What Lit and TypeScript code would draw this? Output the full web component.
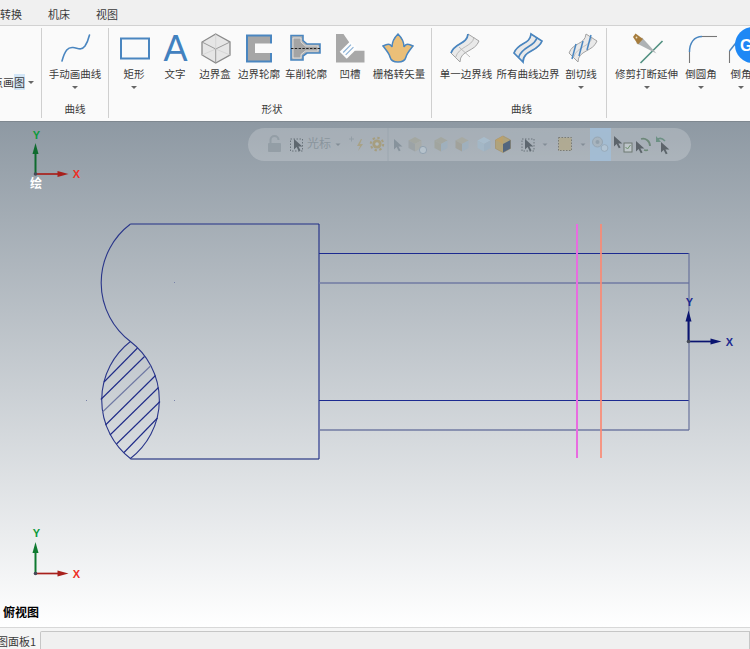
import { LitElement, html, css, svg } from "lit";
import { customElement } from "lit/decorators.js";

const BLUE = "#4a86c0";

const surfaceShape = (dx: number) => svg`
  <path transform="translate(${dx} 0)" d="M468,34 C467,45 455,42 451,53 L460,62 C460,50 475,52 479,41 Z" fill="#e9e9e9" stroke="#a3a3a3" stroke-width="1"/>`;

const icons: Record<string, unknown> = {
  curve: svg`<path d="M62,61 C65,50 68,47 73,47.5 C78,48 81,51 85,46 C87,43 88.5,39 89.5,35" fill="none" stroke="${BLUE}" stroke-width="1.6" stroke-linecap="round"/>`,
  rect: svg`<rect x="121" y="38.5" width="28" height="20" fill="none" stroke="${BLUE}" stroke-width="2"/>`,
  text: svg`<text x="175.5" y="61" text-anchor="middle" class="big-a">A</text>`,
  box: svg`
    <path d="M215.7,34 L230,42 V55 L215.7,63 L202,55 V42 Z" fill="#e6e6e6" stroke="#8a8a8a" stroke-width="1.3"/>
    <path d="M202,42 L215.7,49 L230,42 M215.7,49 V63" fill="none" stroke="#9a9a9a" stroke-width="1"/>
    <path d="M215.7,34 V49 M202,55 L215.7,49 M230,55 L215.7,49" fill="none" stroke="#cfcfcf" stroke-width=".7"/>`,
  outline: svg`
    <rect x="247" y="35.5" width="24" height="26" fill="#a6a6a6" stroke="${BLUE}" stroke-width="2"/>
    <rect x="255" y="43.5" width="17" height="9.5" fill="#fafafa"/>`,
  turn: svg`
    <path d="M291,35.5 H303 V40.5 L307,44 H320 V53 H307 L303,56 V60 H291 Z" fill="#b0b0b0" stroke="${BLUE}" stroke-width="1.6"/>
    <path d="M293,38 H301 V42 L305.5,46 H318 V51 H305.5 L301,54.5 V58 H293 Z" fill="#a4a4a4" stroke="#f4f4f4" stroke-width=".7"/>
    <path d="M291,48.5 H320" stroke="#222" stroke-width="1.2" stroke-dasharray="2.4 1.4"/>`,
  groove: svg`
    <path d="M336,34 H343.5 L355,50.7 H364.5 V62.5 H336 Z" fill="#a8a8a8"/>
    <g transform="rotate(-45 348.5 50)">
      <rect x="341" y="45" width="15" height="10" fill="#fdfdfd"/>
      <path d="M343,48 H354 M343,51.5 H354" stroke="#8db2d6" stroke-width="1.2"/>
    </g>`,
  raster: svg`<path d="M398,34 C402,38 404,41 404,47 C406,43 409,44 413,46 C410,50 407,53 406,57 C405,61 401,62 398,62 C395,62 391,61 390,57 C389,53 386,50 383,46 C387,44 390,43 392,47 C392,41 394,38 398,34Z" fill="#ebbf78" stroke="${BLUE}" stroke-width="1.5"/>`,
  edge: svg`
    ${surfaceShape(0)}
    <path d="M474,37.5 C472,47 459,46 455.5,57.5 M459,47 L470,57" fill="none" stroke="#b4b4b4" stroke-width=".9"/>
    <path d="M468,34 C467,45 455,42 451,53" fill="none" stroke="${BLUE}" stroke-width="1.8"/>`,
  edges: svg`
    ${surfaceShape(63)}
    <path d="M537,37.5 C535,47 522,46 518.5,57.5" fill="none" stroke="${BLUE}" stroke-width="1.6"/>
    <path transform="translate(63 0)" d="M468,34 C467,45 455,42 451,53 L460,62 C460,50 475,52 479,41 Z" fill="none" stroke="${BLUE}" stroke-width="1.7"/>`,
  section: svg`
    <g transform="translate(118 0)">
      <path d="M468,34 C467,45 455,42 451,53 L460,62 C460,50 475,52 479,41 Z" fill="#e9e9e9" stroke="#a3a3a3" stroke-width="1"/>
      <path d="M474,37.5 C472,47 459,46 455.5,57.5" fill="none" stroke="#bdbdbd" stroke-width=".9"/>
    </g>
    <path d="M576,44 L572,59 M583,41 L579,56 M591,35 L587,50" stroke="${BLUE}" stroke-width="1.5"/>`,
  trim: svg`
    <path d="M639.5,63 L661.5,41" stroke="#4f8f7f" stroke-width="1.6"/>
    <path d="M635,43 L641,37.5 L655.5,53.5 Z" fill="#aeb2b5"/>
    <path d="M632,37 L634.5,33.5 L642,39 L637,44.5 Z" fill="#a67c3c"/>
    <circle cx="635.5" cy="37.5" r=".9" fill="#f0e2c4"/>`,
  fillet: svg`
    <path d="M689.5,63 V51.5" fill="none" stroke="#777" stroke-width="1.1"/>
    <path d="M702,36.5 H717" fill="none" stroke="#777" stroke-width="1.1"/>
    <path d="M689.5,52 C689.5,43 694,36.5 702,36.5" fill="none" stroke="${BLUE}" stroke-width="1.5"/>`,
  chamfer: svg`
    <path d="M729.5,63 V51 M741,36.5 H760" fill="none" stroke="#777" stroke-width="1.1"/>
    <path d="M729.5,51 L741,36.5" fill="none" stroke="${BLUE}" stroke-width="1.5"/>`,
};

const centers: Record<string, number> = {
  curve: 75, rect: 134, text: 175, box: 215, outline: 259, turn: 306, groove: 350, raster: 399,
  edge: 466, edges: 528, section: 581, trim: 646, fillet: 701, chamfer: 741,
};

interface Btn { label: string; w: number; icon: string; caret?: boolean }
interface Group { cls: string; title: string; buttons: Btn[] }

const groups: Group[] = [
  { cls: "g2", title: "曲线", buttons: [{ label: "手动画曲线", w: 66, icon: "curve", caret: true }] },
  {
    cls: "g3", title: "形状", buttons: [
      { label: "矩形", w: 42, icon: "rect", caret: true },
      { label: "文字", w: 40, icon: "text" },
      { label: "边界盒", w: 40, icon: "box" },
      { label: "边界轮廓", w: 48, icon: "outline" },
      { label: "车削轮廓", w: 46, icon: "turn" },
      { label: "凹槽", w: 42, icon: "groove" },
      { label: "栅格转矢量", w: 56, icon: "raster" },
    ],
  },
  {
    cls: "g4", title: "曲线", buttons: [
      { label: "单一边界线", w: 58, icon: "edge" },
      { label: "所有曲线边界", w: 66, icon: "edges" },
      { label: "剖切线", w: 40, icon: "section", caret: true },
    ],
  },
  {
    cls: "g5", title: "", buttons: [
      { label: "修剪打断延伸", w: 67, icon: "trim", caret: true },
      { label: "倒圆角", w: 42, icon: "fillet", caret: true },
      { label: "倒角", w: 38, icon: "chamfer", caret: true },
    ],
  },
];

interface Triad {
  ox: number; oy: number; yTip: number; xTip: number;
  cy: string; cx: string; ly: string; lx: string;
  yLabelX: number; yLabelY: number; xLabelX: number;
}

const triads: Triad[] = [
  { ox: 35.5, oy: 174, yTip: 143, xTip: 68.5, cy: "#0f6b2e", cx: "#a8201c", ly: "#0c9a3a", lx: "#ee2e24", yLabelX: 36.5, yLabelY: 135, xLabelX: 76.5 },
  { ox: 35.5, oy: 573.5, yTip: 542, xTip: 68.5, cy: "#0f7a30", cx: "#a8201c", ly: "#0c9a3a", lx: "#ee2e24", yLabelX: 36.5, yLabelY: 533, xLabelX: 76.5 },
  { ox: 688.5, oy: 341.5, yTip: 310.5, xTip: 721.5, cy: "#0a1470", cx: "#0a1470", ly: "#1c2a90", lx: "#1c2a90", yLabelX: 689.5, yLabelY: 302, xLabelX: 729.5 },
];

const renderTriad = (t: Triad) => svg`
  <line x1="${t.ox}" y1="${t.oy}" x2="${t.ox}" y2="${t.yTip + 6}" stroke="${t.cy}" stroke-width="2"/>
  <path d="M${t.ox},${t.yTip} l-3,11 h6 Z" fill="${t.cy}"/>
  <line x1="${t.ox}" y1="${t.oy}" x2="${t.xTip - 6}" y2="${t.oy}" stroke="${t.cx}" stroke-width="1.7"/>
  <path d="M${t.xTip},${t.oy} l-11,-3 v6 Z" fill="${t.cx}"/>
  <circle cx="${t.ox}" cy="${t.oy}" r="1.8" fill="#444a58"/>
  <text x="${t.yLabelX}" y="${t.yLabelY + 4}" text-anchor="middle" class="axis" fill="${t.ly}">Y</text>
  <text x="${t.xLabelX}" y="${t.oy + 4}" text-anchor="middle" class="axis" fill="${t.lx}">X</text>`;

const hatch: [number, number, number, number][] = [
  [104, 382, 137.5, 348],
  [100.8, 399.5, 144.5, 356.5],
  [102.5, 412, 150.5, 366],
  [105.5, 425, 155.5, 375.5],
  [110, 435, 158.5, 387.5],
  [116.5, 444, 160, 401.5],
  [124, 452.5, 157.5, 418],
];

const cursor = (x: number, y: number, fill: string) => svg`
  <path d="M${x},${y} v10.5 l2.6,-2.6 l2.2,4.4 l1.8,-.9 l-2.2,-4 h4 Z" fill="${fill}"/>`;
const caret = (x: number, y: number) => svg`<path d="M${x - 2.5},${y} h5 l-2.5,2.6 Z" fill="#7a858f"/>`;
const cube = (x: number, y: number, top: string, l: string, r: string) => svg`
  <path d="M${x},${y - 7} l6.5,3.5 l-6.5,3.5 l-6.5,-3.5 Z" fill="${top}"/>
  <path d="M${x - 6.5},${y - 3.5} l6.5,3.5 v7.5 l-6.5,-3.5 Z" fill="${l}"/>
  <path d="M${x + 6.5},${y - 3.5} l-6.5,3.5 v7.5 l6.5,-3.5 Z" fill="${r}"/>`;

@customElement("app-root")
export class AppRoot extends LitElement {
  static styles = css`
    :host {
      display: flex;
      flex-direction: column;
      position: relative;
      width: 750px;
      height: 649px;
      overflow: hidden;
      background: #f2f2f2;
      font-family: "Noto Sans CJK SC", "Liberation Sans", sans-serif;
      color: #3a3a3a;
    }
    .tabs {
      display: flex;
      flex: none;
      height: 23px;
      align-items: center;
      gap: 26px;
      padding-top: 2px;
      background: #f0f0f0;
      border-bottom: 1px solid #d2d2d2;
      font-size: 11px;
      line-height: 14px;
    }
    .ribbon {
      display: flex;
      flex: none;
      height: 95px;
      background: #fafafa;
      overflow: hidden;
      position: relative;
    }
    .sep { flex: none; width: 1px; margin: 2px 0 3px; background: #cfcfcf; }
    .lead {
      flex: none;
      width: 41px;
      display: flex;
      justify-content: flex-end;
      align-items: center;
      gap: 3px;
      box-sizing: border-box;
      padding: 48px 7px 0 0;
      height: 64px;
      font-size: 11px;
      line-height: 16px;
      white-space: nowrap;
    }
    .sel { background: #d3e6f7; }
    .group { flex: none; display: flex; flex-direction: column; box-sizing: border-box; padding-top: 4px; }
    .g2 { width: 66px; }
    .g3 { width: 322px; padding-left: 4px; }
    .g4 { width: 174px; padding-left: 5px; }
    .g5 { width: 160px; padding-left: 6px; }
    .buttons { display: flex; flex: 1; }
    .btn { flex: none; display: flex; flex-direction: column; align-items: center; }
    .btn svg { display: block; overflow: visible; }
    .label { font-size: 10.5px; line-height: 16px; white-space: nowrap; }
    .caret {
      width: 0; height: 0; margin-top: 4px;
      border-left: 3px solid transparent;
      border-right: 3px solid transparent;
      border-top: 3px solid #666;
    }
    .lead .caret { margin-top: 0; }
    .title { height: 16px; margin-bottom: 4px; line-height: 16px; font-size: 10.5px; text-align: center; }
    .big-a { font: 36px "Liberation Sans", sans-serif; fill: #4281bf; }
    .logo { position: absolute; left: 735px; top: 1px; width: 36px; height: 36px; }
    .logo-g { font: bold 16px "Liberation Sans", sans-serif; fill: #fff; }
    .view {
      flex: none;
      height: 506px;
      position: relative;
      background: linear-gradient(180deg, #8e99a3 0%, #ffffff 100%);
      border-top: 1px solid #7f8890;
      box-sizing: border-box;
    }
    .canvas { display: block; position: absolute; left: 0; top: 0; }
    .axis { font: bold 11px "Liberation Sans", sans-serif; }
    .draw-hint { font: bold 12px "Noto Sans CJK SC", sans-serif; fill: #fff; }
    .name { position: absolute; left: 3px; top: 482px; font-size: 12px; line-height: 16px; font-weight: 700; color: #000; }
    .floatbar {
      position: absolute; left: 248px; top: 6px; width: 443px; height: 33px;
      border-radius: 17px;
      background: rgba(255, 255, 255, 0.2);
      overflow: hidden;
    }
    .floatbar svg { display: block; }
    .bar-text { font: 12px "Noto Sans CJK SC", sans-serif; fill: #8a959d; }
    .bar-icons { opacity: 0.8; }
    .bottom {
      flex: 1;
      display: flex;
      background: #f5f5f5;
      border-top: 1px solid #d8d8d8;
      box-sizing: border-box;
      padding-top: 3px;
      font-size: 11px;
      min-height: 0;
    }
    .panel-tab { flex: none; width: 40px; margin: 0 3px 0 -3px; line-height: 16px; padding-top: 2px; white-space: nowrap; }
    .panel-rest { flex: 1; background: #f0f0f0; border: 1px solid #c6c6c6; border-bottom: none; border-radius: 2px 0 0 0; }
  `;

  private renderButton(b: Btn) {
    return html`<div class="btn" style="width:${b.w}px">
      <svg width="44" height="36" viewBox="${centers[b.icon] - 22} 30 44 36">${icons[b.icon]}</svg>
      <span class="label">${b.label}</span>
      ${b.caret ? html`<span class="caret"></span>` : ""}
    </div>`;
  }

  private renderFloatbar() {
    return html`<div class="floatbar">
      <svg width="443" height="33" viewBox="248 128 443 33">
        <rect x="590" y="128" width="21" height="33" fill="#a3bcd3"/>
        <line x1="388" y1="128" x2="388" y2="161" stroke="#9aa5ad" stroke-width=".8"/>
        <text x="307" y="148" class="bar-text">光标</text>
        <g class="bar-icons">
          <!-- lock -->
          <rect x="268" y="143" width="13" height="9" rx="1" fill="#8f9aa2"/>
          <path d="M270.5,143 v-3 a4,4 0 0 1 8,0" fill="none" stroke="#8f9aa2" stroke-width="2"/>
          <!-- select -->
          <rect x="290.5" y="139" width="12" height="12" fill="none" stroke="#5c666e" stroke-width="1" stroke-dasharray="1.5 1.5"/>
          ${cursor(294, 139, "#4c565e")}
          ${caret(338, 143.5)}
          <!-- bolt -->
          <path d="M349,139 h5 M351.5,136.5 v5" stroke="#8f9aa2" stroke-width="1"/>
          <path d="M361,139 l-4,7 h3 l-2,5 l5,-7 h-3 l2,-5 Z" fill="#a89f7c"/>
          <!-- gear -->
          <circle cx="377" cy="144" r="4.6" fill="#a69a72"/>
          <circle cx="377" cy="144" r="6.2" fill="none" stroke="#a69a72" stroke-width="2" stroke-dasharray="2.4 2.4"/>
          <circle cx="377" cy="144" r="1.8" fill="#b4bec4"/>
          <!-- view cubes -->
          ${cursor(394, 139, "#7f8c96")}
          ${cube(415, 144, "#a3a69c", "#9aa0a2", "#a8aba6")}
          <circle cx="423" cy="150" r="3.6" fill="#b9c6d0" stroke="#8397a8" stroke-width=".8"/>
          ${cube(441, 144, "#a3a69c", "#a0a39a", "#9eb0bf")}
          ${cube(462, 144, "#a7a99f", "#a09f95", "#9eb0bf")}
          ${cube(484, 144, "#a9c0d1", "#a3b9ca", "#9cb2c4")}
          <path d="M503,136 l7.5,4 v8.5 l-7.5,4 l-7.5,-4 v-8.5 Z" fill="#b3a06c" stroke="#a38a54" stroke-width=".7"/>
          <path d="M503,144 l7.5,-4 v8.5 l-7.5,4 Z" fill="#3e5470"/>
          <path d="M503,144 l-7.5,-4 l7.5,-4 Z" fill="#c09e5a"/>
          <!-- select 2 -->
          <rect x="522" y="139" width="12" height="12" fill="none" stroke="#5c666e" stroke-width="1" stroke-dasharray="1.5 1.5"/>
          ${cursor(525, 139, "#4c565e")}
          ${caret(545, 143.5)}
          <rect x="558.5" y="137.5" width="13" height="13" fill="#b2a98a" stroke="#6e6f66" stroke-width="1" stroke-dasharray="1.5 1.5"/>
          ${caret(583, 143.5)}
          <!-- circles -->
          <circle cx="597.5" cy="142" r="5" fill="#a9b3bb" stroke="#93a0ab" stroke-width="1"/>
          <circle cx="597.5" cy="142" r="2" fill="#8d99a3"/>
          <circle cx="604.5" cy="148" r="3.4" fill="#b6c6d4" stroke="#8d9dab" stroke-width=".8"/>
          <!-- cursor check -->
          ${cursor(614, 136, "#4a5258")}
          <rect x="624" y="143" width="8" height="9" fill="#c3cbcf" stroke="#5f6a60" stroke-width="1"/>
          <path d="M625.5,147 l2,2 l3,-4" fill="none" stroke="#5e8a58" stroke-width="1"/>
          <!-- cursor rotate -->
          ${cursor(636, 141, "#4a5258")}
          <path d="M641,139 a7,7 0 0 1 9,7 M648,150 a7,7 0 0 1 -4,0" fill="none" stroke="#5f7f6a" stroke-width="1.8"/>
          <!-- undo cursor -->
          ${cursor(661, 142, "#4a5258")}
          <path d="M665,141 c-3,-3 -6,-3 -8,-1" fill="none" stroke="#5f8a78" stroke-width="1.6"/>
          <path d="M656,136 v6 h5 Z" fill="#5f8a78"/>
        </g>
      </svg>
    </div>`;
  }

  render() {
    return html`
      <div class="tabs">
        <span>转换</span><span>机床</span><span>视图</span>
      </div>
      <div class="ribbon">
        <div class="lead"><span>点画<span class="sel">图</span></span><span class="caret"></span></div>
        ${groups.map(
          (g) => html`<div class="sep"></div>
            <div class="group ${g.cls}">
              <div class="buttons">${g.buttons.map((b) => this.renderButton(b))}</div>
              <div class="title">${g.title}</div>
            </div>`
        )}
        <svg class="logo" viewBox="0 0 36 36">
          <circle cx="18" cy="18" r="18" fill="#1e88f5"/>
          <text x="5" y="24" class="logo-g">G</text>
        </svg>
      </div>
      <div class="view">
        <svg class="canvas" width="750" height="506" viewBox="0 122 750 506">
          <g fill="none">
            <path d="M130.5,224 H319 M130.5,459 H319" stroke="#4e5a96" stroke-width="1.3"/>
            <path d="M319,224 V459" stroke="#1c2a86" stroke-width="1.1"/>
            <path d="M319,253.5 H689 M319,400.5 H689" stroke="#1c2a90" stroke-width="1"/>
            <path d="M319,283 H689 M319,430 H689" stroke="#717ba3" stroke-width="1.5"/>
            <path d="M689,253 V430" stroke="#68729c" stroke-width="1.2"/>
            <path d="M130.5,224 A73.6,73.6 0 0 0 130.4,341.5 A73.6,73.6 0 0 1 130.4,458.5 A74,74 0 0 1 130.4,341.5" stroke="#2a368a" stroke-width="1.1"/>
            ${hatch.map(
              (h, i) => svg`<line x1=${h[0]} y1=${h[1]} x2=${h[2]} y2=${h[3]} stroke=${i === 2 ? "#6f78a3" : "#1f2b88"} stroke-width="1.1"/>`
            )}
            <line x1="577" y1="224" x2="577" y2="458" stroke="#e86ce0" stroke-width="2"/>
            <line x1="601" y1="224" x2="601" y2="458" stroke="#fb8a74" stroke-width="1.7"/>
          </g>
          <g fill="#7a83a8">
            <rect x="174" y="282" width="1" height="1"/>
            <rect x="174" y="400" width="1" height="1"/>
            <rect x="86" y="400" width="1" height="1"/>
          </g>
          ${triads.map(renderTriad)}
          <text x="36" y="188" text-anchor="middle" class="draw-hint">绘</text>
        </svg>
        ${this.renderFloatbar()}
        <div class="name">俯视图</div>
      </div>
      <div class="bottom">
        <div class="panel-tab">图面板1</div>
        <div class="panel-rest"></div>
      </div>
    `;
  }
}
